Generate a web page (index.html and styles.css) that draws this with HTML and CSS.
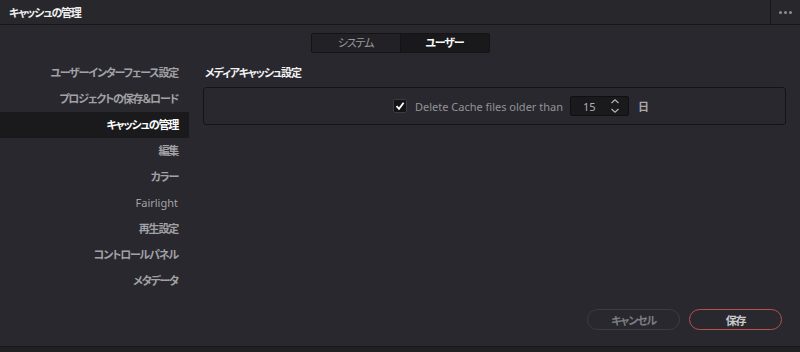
FILE: index.html
```html
<!DOCTYPE html>
<html lang="ja">
<head>
  <meta charset="UTF-8">
  <title>キャッシュの管理</title>
  <link rel="stylesheet" href="styles.css">
</head>
<body>
  <div class="window">
    <div class="titlebar">
      <div class="title">キャッシュの管理</div>
      <div class="more"><span></span><span></span><span></span></div>
    </div>

    <div class="main">
      <div class="tabs">
        <div class="tab">システム</div>
        <div class="tab active">ユーザー</div>
      </div>

      <div class="content">
        <ul class="sidebar">
          <li>ユーザーインターフェース設定</li>
          <li>プロジェクトの保存＆ロード</li>
          <li class="selected">キャッシュの管理</li>
          <li>編集</li>
          <li>カラー</li>
          <li class="latin">Fairlight</li>
          <li>再生設定</li>
          <li>コントロールパネル</li>
          <li>メタデータ</li>
        </ul>

        <div class="panel">
          <div class="section-title">メディアキャッシュ設定</div>
          <div class="box">
            <label class="check">
              <span class="checkbox">
                <svg width="10" height="10" viewBox="0 0 10 10"><path d="M1.5 5.2 L4 7.8 L8.6 1.8" fill="none" stroke="#fff" stroke-width="1.8"/></svg>
              </span>
              <span class="label-text latin">Delete Cache files older than</span>
            </label>
            <div class="spin">
              <span class="spin-value latin">15</span>
              <svg class="spin-arrows" width="10" height="16" viewBox="0 0 10 16"><path d="M1.5 5 L5 1.8 L8.5 5 M1.5 11 L5 14.2 L8.5 11" fill="none" stroke="#b5b5b8" stroke-width="1.2"/></svg>
            </div>
            <span class="unit">日</span>
          </div>
        </div>
      </div>

      <div class="actions">
        <button class="btn cancel">キャンセル</button>
        <button class="btn save">保存</button>
      </div>
    </div>
    <div class="bottom"></div>
  </div>
</body>
</html>
```

FILE: styles.css
```css
body {
  margin: 0;
  background: #222226;
  font-family: "Noto Sans", "Noto Sans CJK JP", sans-serif;
  font-size: 11px;
  font-feature-settings: "palt";
  letter-spacing: -1.2px;
  color: #a9a9ad;
}
.latin {
  font-size: 11px;
  letter-spacing: 0;
}
.window {
  width: 800px;
  height: 352px;
  display: flex;
  flex-direction: column;
  background: #28282e;
}
.titlebar {
  height: 24px;
  display: flex;
  align-items: center;
  border-bottom: 1px solid #17171a;
  background: #27272c;
}
.title {
  flex: 1;
  padding-left: 9px;
  color: #f0f0f0;
  font-weight: bold;
}
.more {
  width: 29px;
  height: 24px;
  border-left: 1px solid #17171a;
  display: flex;
  align-items: center;
  justify-content: center;
  gap: 2px;
}
.more span {
  width: 3px;
  height: 3px;
  border-radius: 50%;
  background: #8d8d92;
}
.main {
  flex: 1;
  display: flex;
  flex-direction: column;
  padding: 8px 18px 16px 0;
  border-bottom: 1px solid #17171a;
}
.tabs {
  display: flex;
  align-self: center;
  margin-left: 18px;
  border: 1px solid #141417;
  border-radius: 2px;
}
.tab {
  width: 88px;
  height: 18px;
  line-height: 18px;
  text-align: center;
  background: #212126;
  color: #98989c;
}
.tab + .tab {
  border-left: 1px solid #141417;
}
.tab.active {
  background: #19191c;
  color: #fafafa;
  font-weight: bold;
}
.content {
  display: flex;
  margin-top: 7px;
}
.sidebar {
  list-style: none;
  margin: 0;
  padding: 0;
  width: 189px;
}
.sidebar li {
  height: 26px;
  line-height: 26px;
  text-align: right;
  padding-right: 11px;
  color: #a2a2a6;
  font-weight: bold;
}
.sidebar li.latin {
  font-weight: normal;
}
.sidebar li.selected {
  background: #1a1a1d;
  color: #ffffff;
}
.panel {
  flex: 1;
  margin-left: 14px;
  margin-right: -4px;
}
.section-title {
  height: 26px;
  line-height: 26px;
  padding-left: 2px;
  color: #f2f2f2;
  font-weight: bold;
}
.box {
  margin-top: 1px;
  height: 36px;
  border: 1px solid #141417;
  border-radius: 3px;
  display: flex;
  align-items: center;
  padding-left: 189px;
}
.check {
  display: flex;
  align-items: center;
}
.checkbox {
  width: 12px;
  height: 12px;
  border: 1px solid #3a3a3f;
  border-radius: 2px;
  background: #141416;
  display: flex;
  align-items: center;
  justify-content: center;
}
.label-text {
  margin-left: 8px;
  color: #939397;
}
.spin {
  margin-left: 7px;
  height: 18px;
  border: 1px solid #101012;
  border-radius: 2px;
  background: #1a1a1d;
  display: flex;
  align-items: center;
  justify-content: space-between;
  padding: 0 8px 0 12px;
  width: 37px;
}
.spin-value {
  color: #b0b0b4;
}
.unit {
  margin-left: 9px;
  color: #a9a9ad;
  font-weight: bold;
}
.actions {
  margin-top: auto;
  display: flex;
  justify-content: flex-end;
  gap: 9px;
}
.btn {
  width: 93px;
  height: 21px;
  border-radius: 11px;
  background: #28282e;
  font-family: "Noto Sans", "Noto Sans CJK JP", sans-serif;
  font-size: 11px;
  font-feature-settings: "palt";
  letter-spacing: -1.2px;
  font-weight: bold;
  padding: 0;
}
.btn.cancel {
  border: 1px solid #3c3c42;
  color: #7d7d82;
}
.btn.save {
  border: 1px solid #b8524d;
  color: #c9c9cc;
}
.bottom {
  height: 5px;
  background: #212125;
}
```
